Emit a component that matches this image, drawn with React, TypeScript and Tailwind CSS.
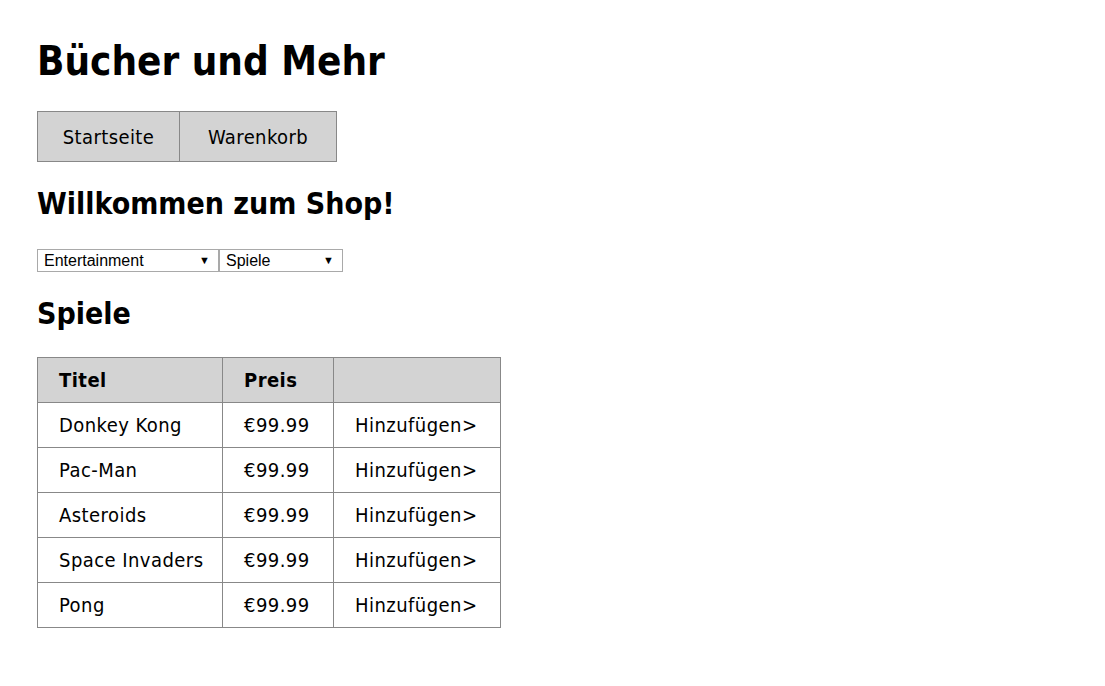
import React from "react";

const games = ["Donkey Kong", "Pac-Man", "Asteroids", "Space Invaders", "Pong"];

function FakeSelect({ label, w }: { label: string; w: string }) {
  return (
    <div
      className={`${w} h-[23px] border border-[#a9a9a9] bg-white flex items-center justify-between pl-[6px] pr-[8px] text-[16px] leading-none text-black`}
      style={{ fontFamily: '"Liberation Sans", Arial, sans-serif' }}
    >
      <span>{label}</span>
      <span className="text-[11px]">▼</span>
    </div>
  );
}

export default function App() {
  return (
    <div
      className="bg-white min-h-[686px] px-[37px] pt-[36px] text-black"
      style={{ fontFamily: '"DejaVu Sans Condensed", "DejaVu Sans", sans-serif' }}
    >
      <h1 className="text-[40px] font-bold leading-[50px] m-0">Bücher und Mehr</h1>
      <div className="flex mt-[25px] tracking-[0.4px]">
        <div className="w-[143px] h-[51px] border border-[#888] bg-[#d3d3d3] flex items-center justify-center text-[20px]">
          Startseite
        </div>
        <div className="w-[157px] h-[51px] border border-l-0 border-[#888] bg-[#d3d3d3] flex items-center justify-center text-[20px]">
          Warenkorb
        </div>
      </div>
      <h2 className="text-[30px] font-bold leading-[40px] mt-[22px]">Willkommen zum Shop!</h2>
      <div className="flex mt-[25px]">
        <FakeSelect label="Entertainment" w="w-[182px]" />
        <FakeSelect label="Spiele" w="w-[124px]" />
      </div>
      <h3 className="text-[30px] font-bold leading-[40px] mt-[22px]">Spiele</h3>
      <table className="mt-[23px] border-collapse text-[20px] tracking-[0.45px]">
        <thead>
          <tr className="bg-[#d3d3d3] h-[45px]">
            <th className="border border-[#888] text-left font-bold pl-[21px] w-[185px]">Titel</th>
            <th className="border border-[#888] text-left font-bold pl-[21px] w-[111px]">Preis</th>
            <th className="border border-[#888] w-[167px]"></th>
          </tr>
        </thead>
        <tbody>
          {games.map((g) => (
            <tr key={g} className="h-[45px]">
              <td className="border border-[#888] pl-[21px]">{g}</td>
              <td className="border border-[#888] pl-[21px]">€99.99</td>
              <td className="border border-[#888] pl-[21px]">Hinzufügen&gt;</td>
            </tr>
          ))}
        </tbody>
      </table>
    </div>
  );
}
